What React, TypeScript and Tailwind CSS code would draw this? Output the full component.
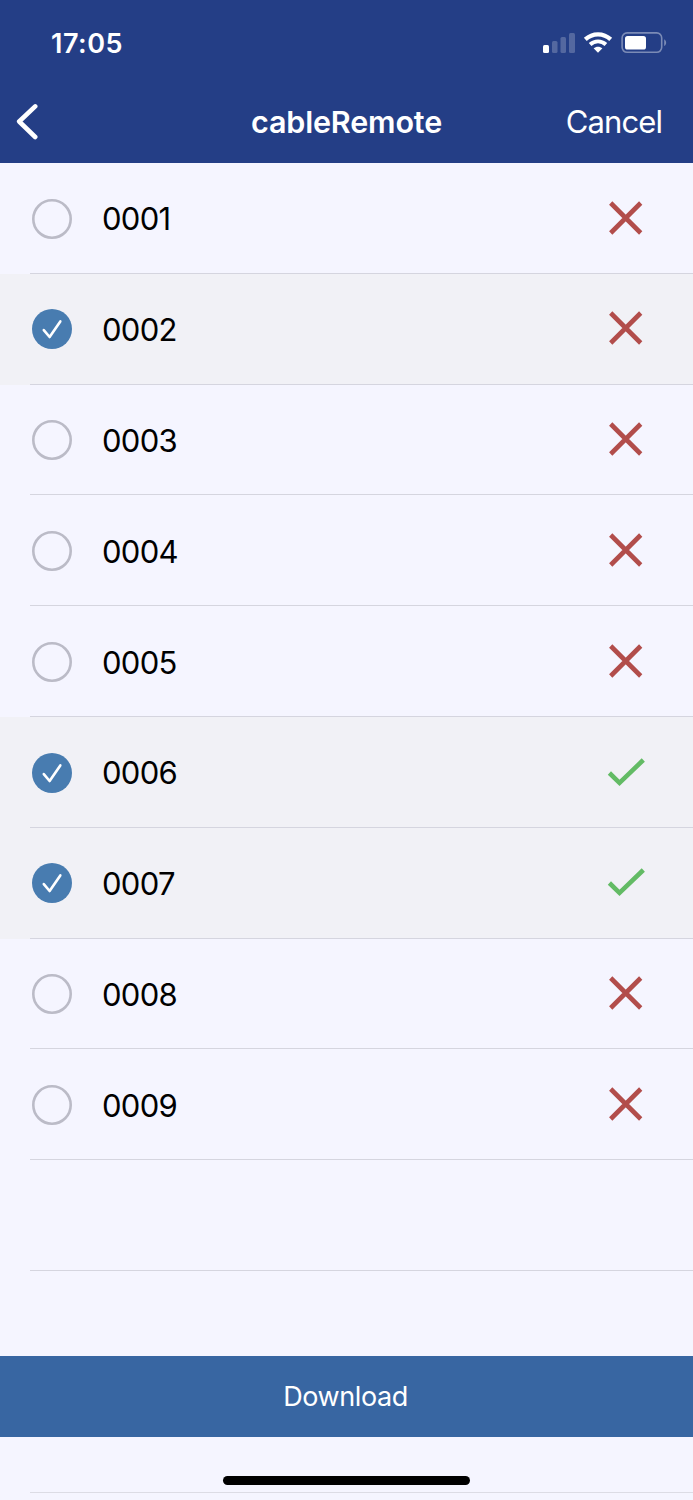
import React, { useState } from 'react';

const items = [
  { id: '0001', downloaded: false },
  { id: '0002', downloaded: false },
  { id: '0003', downloaded: false },
  { id: '0004', downloaded: false },
  { id: '0005', downloaded: false },
  { id: '0006', downloaded: true },
  { id: '0007', downloaded: true },
  { id: '0008', downloaded: false },
  { id: '0009', downloaded: false },
];

const StatusBar = () => (
  <div className="flex h-[82px] items-start justify-between pl-[51px] pr-[26px] pt-[26px]">
    <span className="pt-px text-[27px] leading-[34px] font-semibold tracking-[0.5px]">17:05</span>
    <svg className="mt-[4px]" width="124" height="26" viewBox="0 0 124 26" fill="none">
      {/* signal */}
      <rect x="0" y="15" width="6" height="8" rx="1.5" fill="white" />
      <rect x="9" y="11" width="5.5" height="12" rx="1.5" fill="white" fillOpacity="0.22" />
      <rect x="17.5" y="7" width="5.5" height="16" rx="1.5" fill="white" fillOpacity="0.22" />
      <rect x="26" y="3" width="6" height="20" rx="1.5" fill="white" fillOpacity="0.22" />
      {/* wifi */}
      <path d="M42.3 9.4C49.6 2.6 60.4 2.6 67.7 9.4" stroke="white" strokeWidth="4.2" />
      <path d="M47.1 14.5C51.7 10.3 58.3 10.3 62.9 14.5" stroke="white" strokeWidth="3.9" />
      <path d="M55 22.8L50.6 18.3C53.2 16.1 56.8 16.1 59.4 18.3Z" fill="white" />
      {/* battery */}
      <rect x="79.1" y="2.9" width="39.6" height="19.4" rx="5" stroke="white" strokeOpacity="0.4" strokeWidth="1.6" />
      <rect x="82" y="6" width="21" height="13.6" rx="2.6" fill="white" />
      <path d="M121.2 9.2C123.8 10.6 123.8 14.6 121.2 16Z" fill="white" fillOpacity="0.4" />
    </svg>
  </div>
);

const NavBar = () => (
  <div className="grid h-[81px] grid-cols-[1fr_auto_1fr] items-center">
    <button className="pl-[16px]">
      <svg className="-mt-[3px]" width="22" height="38" viewBox="0 0 22 38" fill="none">
        <path d="M19.2 4.4L3.2 19.5L19.2 35" stroke="white" strokeWidth="4.6" strokeLinecap="round" strokeLinejoin="round" />
      </svg>
    </button>
    <h1 className="pb-[2px] text-[30.5px] font-semibold tracking-[-0.15px]">cableRemote</h1>
    <button className="pr-[31px] pb-px text-right text-[31px] tracking-[-0.9px]">Cancel</button>
  </div>
);

const Radio = ({ checked }: { checked: boolean }) => (
  <svg width="40" height="40" viewBox="0 0 40 40" fill="none">
    {checked ? (
      <>
        <circle cx="20" cy="20" r="20" fill="#487cb0" />
        <path d="M11.8 21.1L17.6 28L28.3 12.4" stroke="white" strokeWidth="2.6" strokeLinecap="round" strokeLinejoin="round" />
      </>
    ) : (
      <circle cx="20" cy="20" r="18.7" stroke="#bbbbc7" strokeWidth="2.6" />
    )}
  </svg>
);

const StatusIcon = ({ downloaded }: { downloaded: boolean }) => (
  <svg width="40" height="40" viewBox="0 0 40 40" fill="none">
    {downloaded ? (
      <path d="M3.4 20L13.5 29.8L37.3 7" stroke="#63bb65" strokeWidth="4.6" />
    ) : (
      <path d="M4.7 4L34.7 34M34.7 4L4.7 34" stroke="#b24d4b" strokeWidth="4.6" />
    )}
  </svg>
);

const App = () => {
  const [selected, setSelected] = useState(['0002', '0006', '0007']);

  const toggle = (id: string) => {
    setSelected(selected.includes(id) ? selected.filter((s) => s !== id) : [...selected, id]);
  };

  return (
    <div className="flex h-[1500px] w-[693px] flex-col overflow-hidden bg-[#f5f5ff] font-['Inter','Liberation_Sans',sans-serif] text-black">
      <header className="h-[163px] shrink-0 bg-[#243e86] text-white">
        <StatusBar />
        <NavBar />
      </header>

      <ul className="shrink-0">
        {items.map((item) => (
          <li
            key={item.id}
            onClick={() => toggle(item.id)}
            className={`h-[110.8px] pl-[30px] ${selected.includes(item.id) ? 'bg-[#f1f1f6]' : ''}`}
          >
            <div className="flex h-full items-center border-b border-[#d5d5df] pt-[1.4px] pl-[2px] pr-[47px]">
              <Radio checked={selected.includes(item.id)} />
              <span className="ml-[30px] flex-1 pt-[2px] text-[31px] tracking-[-0.7px]">{item.id}</span>
              <StatusIcon downloaded={item.downloaded} />
            </div>
          </li>
        ))}
        <li className="h-[110.8px] pl-[30px]">
          <div className="h-full border-b border-[#d5d5df]" />
        </li>
      </ul>

      <div className="flex-1" />
      <button className="h-[81px] shrink-0 bg-[#3866a2] pt-[2px] pr-[2px] text-[27px] tracking-[-0.4px] text-white">Download</button>
      <footer className="h-[63px] shrink-0 pl-[30px]">
        <div className="h-[56px] border-b border-[#dcdce5] pl-[193px] pt-[39px]">
          <div className="h-[9px] w-[247px] rounded-full bg-black" />
        </div>
      </footer>
    </div>
  );
};

export default App;
